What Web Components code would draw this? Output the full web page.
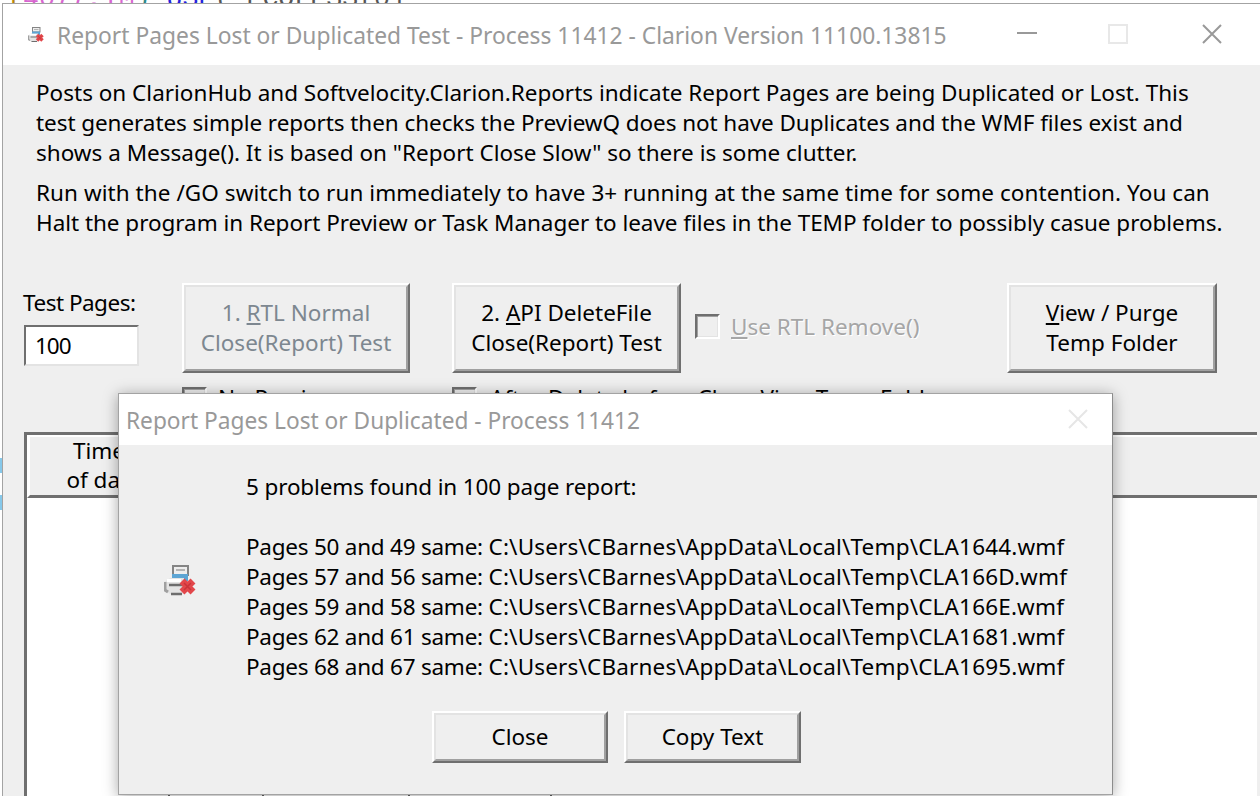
<!DOCTYPE html>
<html>
<head>
<meta charset="utf-8">
<title>Report Pages Lost or Duplicated Test</title>
<style>
    html, body { margin: 0; height: 100%; overflow: hidden; background: #fff; }
    body { font-family: "Noto Sans", "Open Sans", "Liberation Sans", sans-serif; font-size: 22.5px; color: #000; }
    .page { letter-spacing: -.24px; }
    .path { letter-spacing: .17px; }
</style>
</head>
<body>
<rp-desktop>
    <rp-window title-text="Report Pages Lost or Duplicated Test - Process 11412 - Clarion Version 11100.13815" controls>
        <rp-intro>
            <p><span>Posts on ClarionHub and Softvelocity.Clarion.Reports indicate Report Pages are being Duplicated or Lost. This</span><br>
            <span style="letter-spacing:-.07px">test generates simple reports then checks the PreviewQ does not have Duplicates and the WMF files exist and</span><br>
            <span>shows a Message(). It is based on "Report Close Slow" so there is some clutter.</span></p>
            <p><span style="letter-spacing:.065px">Run with the /GO switch to run immediately to have 3+ running at the same time for some contention. You can</span><br>
            <span style="letter-spacing:-.035px">Halt the program in Report Preview or Task Manager to leave files in the TEMP folder to possibly casue problems.</span></p>
        </rp-intro>
        <rp-controls>
            <rp-pages-field value="100"></rp-pages-field>
            <rp-button disabled style="width:228px;height:90px">1. <u>R</u>TL Normal<br>Close(Report) Test</rp-button>
            <rp-button style="width:229px;height:90px;margin-left:42px">2. <u>A</u>PI DeleteFile<br>Close(Report) Test</rp-button>
            <rp-check disabled style="margin:31px 0 0 14px;--label-shift:1px"><u>U</u>se RTL Remove()</rp-check>
            <rp-button style="width:210px;height:90px;margin-left:auto;margin-right:43px"><u>V</u>iew / Purge<br>Temp Folder</rp-button>
        </rp-controls>
        <rp-options>
            <rp-check style="margin-left:158px;width:270px;--label-shift:-1px">No Preview</rp-check>
            <rp-check style="--label-shift:-1px;--label-gap:13px">After Delete before Close View Temp Folder</rp-check>
        </rp-options>
        <rp-table></rp-table>
    </rp-window>
    <rp-dialog title-text="Report Pages Lost or Duplicated - Process 11412">
        <div style="letter-spacing:-.13px">5 problems found in 100 page report:</div>
        <div>&nbsp;</div>
        <div><span class="page">Pages 50 and 49 same: </span><span class="path">C:\Users\CBarnes\AppData\Local\Temp\CLA1644.wmf</span></div>
        <div><span class="page">Pages 57 and 56 same: </span><span class="path">C:\Users\CBarnes\AppData\Local\Temp\CLA166D.wmf</span></div>
        <div><span class="page">Pages 59 and 58 same: </span><span class="path">C:\Users\CBarnes\AppData\Local\Temp\CLA166E.wmf</span></div>
        <div><span class="page">Pages 62 and 61 same: </span><span class="path">C:\Users\CBarnes\AppData\Local\Temp\CLA1681.wmf</span></div>
        <div><span class="page">Pages 68 and 67 same: </span><span class="path">C:\Users\CBarnes\AppData\Local\Temp\CLA1695.wmf</span></div>
    </rp-dialog>
</rp-desktop>

<script>
class RpElement extends HTMLElement {

    static template() {
        return ``;
    }

    constructor() {
        super();
        this.attachShadow({ mode: 'open' });
        this.root = this.shadowRoot;
        this.root.innerHTML = this.constructor.template(this);
    }

}

class RpDesktop extends RpElement {

    static template() {
        return `
            <style>
                :host { display: block; position: relative; width: 1260px; height: 796px; overflow: hidden; background: #fff; }
                .code {
                    display: flex; align-items: flex-end; height: 4px; overflow: hidden; padding-left: 7px;
                    font: 26.6px "Liberation Mono", monospace; white-space: pre; line-height: 9px;
                }
                .bit { position: absolute; left: 0; width: 2px; background: #86c8ea; }
            </style>
            <div class="code"><span style="color:#b8860b">[</span><span style="color:#d866d0">4077,</span><span style="color:#d866d0">IM</span><span style="color:#2a8a8a">) </span><span style="color:#2222dd">USE</span><span style="color:#555">(*ECOLESS[0]</span></div>
            <div class="bit" style="top:458px;height:15px"></div>
            <div class="bit" style="top:495px;height:15px"></div>
            <slot></slot>
        `;
    }

}

class RpIcon extends RpElement {

    static template(attr) {
        const size = attr.getAttribute('size') || 32;
        return `
            <style>
                :host { display: block; width: ${size}px; height: ${size}px; }
                svg { display: block; }
            </style>
            <svg width="${size}" height="${size}" viewBox="0 0 32 32">
                <rect x="9" y="1" width="15" height="9" fill="#eee" stroke="#858585" stroke-width="2"/>
                <rect x="12" y="4" width="9" height="2" fill="#b5b5b5"/>
                <path d="M8 9h16v7H8z" fill="#5da5d4"/>
                <path d="M0 17l6-4h14v16H6l-5-3z" fill="#e4e4e4"/>
                <path d="M3 14h14v3H3z" fill="#fff"/>
                <path d="M1 17v8l3 2" fill="none" stroke="#a0a0a0" stroke-width="3"/>
                <path d="M5 20h14M7 29h11" stroke="#6d6d6d" stroke-width="2.4"/>
                <path d="M18 16l11 11M29 16L18 27" stroke="#e2474b" stroke-width="7"/>
                <path d="M20 18l7 7M27 18l-7 7" stroke="#c9343a" stroke-width="1.5"/>
            </svg>
        `;
    }

}

class RpWindow extends RpElement {

    static template(attr) {
        return `
            <style>
                :host {
                    display: flex; flex-direction: column; position: absolute; left: 2px; top: 3px; width: 1258px; height: 793px;
                    border-left: 1px solid #a3a3a3; border-top: 1px solid #a3a3a3; box-sizing: border-box; background: #efefef;
                }
                .bar { display: flex; align-items: center; height: 61px; flex: none; background: #fff; padding-left: 25px; }
                .title { margin: 2px 0 0 13px; font-size: 22.8px; color: #999; white-space: nowrap; flex: 1; }
                .btn { flex: none; width: 92px; height: 61px; display: flex; align-items: center; justify-content: center; }
                .btn svg { margin-top: -2px; }
            </style>
            <div class="bar">
                <rp-icon size="16"></rp-icon>
                <div class="title">${attr.getAttribute('title-text')}</div>
                <div class="btn" style="margin-right:-1px">
                    <svg width="20" height="20" viewBox="0 0 20 20"><path d="M0 9h20" stroke="#999" stroke-width="2"/></svg>
                </div>
                <div class="btn" style="margin-right:2px">
                    <svg width="20" height="20" viewBox="0 0 20 20"><rect x="1" y="1" width="18" height="18" fill="none" stroke="#e8e8e8" stroke-width="2"/></svg>
                </div>
                <div class="btn" style="margin-right:2px">
                    <svg width="20" height="20" viewBox="0 0 20 20"><path d="M1 1l18 18M19 1L1 19" stroke="#999" stroke-width="2"/></svg>
                </div>
            </div>
            <slot></slot>
        `;
    }

}

class RpIntro extends RpElement {

    static template() {
        return `
            <style>
                :host { display: block; padding: 13px 0 0 33px; line-height: 30px; white-space: nowrap; height: 160px; }
                ::slotted(p) { margin: 0 0 10px 0; }
            </style>
            <slot></slot>
        `;
    }

}

class RpControls extends RpElement {

    static template() {
        return `
            <style>
                :host { display: flex; align-items: flex-start; padding-left: 21px; margin-top: 45px; height: 90px; }
            </style>
            <slot></slot>
        `;
    }

}

class RpOptions extends RpElement {

    static template() {
        return `
            <style>
                :host { display: flex; align-items: flex-start; padding-left: 21px; margin-top: 14px; height: 45px; }
            </style>
            <slot></slot>
        `;
    }

}

class RpPagesField extends RpElement {

    static template(attr) {
        return `
            <style>
                :host { display: block; width: 158px; flex: none; }
                label { display: block; margin: 5px 0 0 -1px; line-height: 30px; letter-spacing: -.5px; }
                .input {
                    margin-top: 7px; width: 115px; height: 41px; box-sizing: border-box; padding-left: 9px;
                    background: #fff; line-height: 37px; letter-spacing: -1px;
                    border: 2px solid; border-color: #6f6f6f #e3e3e3 #e3e3e3 #6f6f6f;
                }
            </style>
            <label>Test Pages:</label>
            <div class="input">${attr.getAttribute('value')}</div>
        `;
    }

}

class RpButton extends RpElement {

    static template() {
        return `
            <style>
                :host {
                    display: flex; flex: none; align-items: center; justify-content: center; box-sizing: border-box;
                    border: 2px solid; border-color: #fff #6f6f6f #6f6f6f #fff;
                    text-align: center; line-height: 30px; white-space: nowrap;
                }
                :host([disabled]) { color: #7d8790; }
                .face {
                    flex: 1; align-self: stretch; display: flex; align-items: center; justify-content: center;
                    box-sizing: border-box;
                    border: 2px solid; border-color: #e3e3e3 #a0a0a0 #a0a0a0 #e3e3e3;
                }
            </style>
            <div class="face"><div><slot></slot></div></div>
        `;
    }

}

class RpCheck extends RpElement {

    static template() {
        return `
            <style>
                :host { display: flex; flex: none; align-items: flex-start; white-space: nowrap; line-height: 24px; }
                :host([disabled]) { color: #a6a6a6; text-shadow: 1px 1px 0 #fff; }
                .box {
                    width: 25px; height: 25px; box-sizing: border-box; flex: none; margin-right: var(--label-gap, 11px);
                    border: 2px solid; border-color: #6f6f6f #fff #fff #6f6f6f; box-shadow: inset 1px 1px 0 #a0a0a0, inset -1px -1px 0 #e3e3e3;
                }
                .label { margin-top: var(--label-shift, 0); }
            </style>
            <div class="box"></div>
            <div class="label"><slot></slot></div>
        `;
    }

}

class RpTable extends RpElement {

    static template() {
        return `
            <style>
                :host {
                    display: flex; flex-direction: column; flex: 1; min-height: 0; margin: 0 3px 0 21px; box-sizing: border-box;
                    border: solid #6f6f6f; border-width: 3px 0 0 3px; background: #fff;
                }
                .head {
                    display: grid; grid-template-columns: 138px 1fr; height: 58px; flex: none; background: #efefef;
                    border-top: 2px solid #fff; border-left: 3px solid #fff; border-bottom: 3px solid #6f6f6f;
                }
                .cell { text-align: center; line-height: 29px; margin-top: -1px; }
                .rows { flex: 1; display: grid; grid-template-columns: 143px 94px 146px 142px 1fr; }
                .rows div { border-right: 2px solid #666; }
                .rows div:last-child { border-right: 0; }
            </style>
            <div class="head">
                <div class="cell">Time<br>of day</div>
                <div class="cell"></div>
            </div>
            <div class="rows">
                <div></div><div></div><div></div><div></div><div></div>
            </div>
        `;
    }

}

class RpDialog extends RpElement {

    static template(attr) {
        return `
            <style>
                :host {
                    display: flex; flex-direction: column; position: absolute; left: 118px; top: 393px; width: 995px; height: 402px;
                    box-sizing: border-box; border: 1px solid #a3a3a3; border-right-color: #8c8c8c; background: #efefef;
                    box-shadow: 0 2px 14px rgba(0,0,0,.35);
                }
                .bar { display: flex; align-items: center; height: 51px; flex: none; background: #fff; padding-left: 7px; }
                .title { flex: 1; margin-top: 2px; font-size: 22.7px; color: #999; white-space: nowrap; }
                .close { margin-right: 24px; height: 20px; margin-top: -2px; }
                .body { display: flex; padding-top: 27px; height: 251px; }
                .icon { width: 127px; flex: none; padding: 93px 0 0 45px; box-sizing: border-box; }
                .text { line-height: 30px; white-space: nowrap; }
                .buttons { display: flex; gap: 16px; padding-left: 313px; margin-top: -12px; }
            </style>
            <div class="bar">
                <div class="title">${attr.getAttribute('title-text')}</div>
                <svg class="close" width="20" height="20" viewBox="0 0 20 20"><path d="M1 1l18 18M19 1L1 19" stroke="#e6e6e6" stroke-width="2"/></svg>
            </div>
            <div class="body">
                <div class="icon"><rp-icon size="32"></rp-icon></div>
                <div class="text"><slot></slot></div>
            </div>
            <div class="buttons">
                <rp-button style="width:176px;height:52px">Close</rp-button>
                <rp-button style="width:177px;height:52px">Copy Text</rp-button>
            </div>
        `;
    }

}

customElements.define('rp-icon', RpIcon);
customElements.define('rp-button', RpButton);
customElements.define('rp-check', RpCheck);
customElements.define('rp-pages-field', RpPagesField);
customElements.define('rp-table', RpTable);
customElements.define('rp-intro', RpIntro);
customElements.define('rp-controls', RpControls);
customElements.define('rp-options', RpOptions);
customElements.define('rp-window', RpWindow);
customElements.define('rp-dialog', RpDialog);
customElements.define('rp-desktop', RpDesktop);
</script>
</body>
</html>
